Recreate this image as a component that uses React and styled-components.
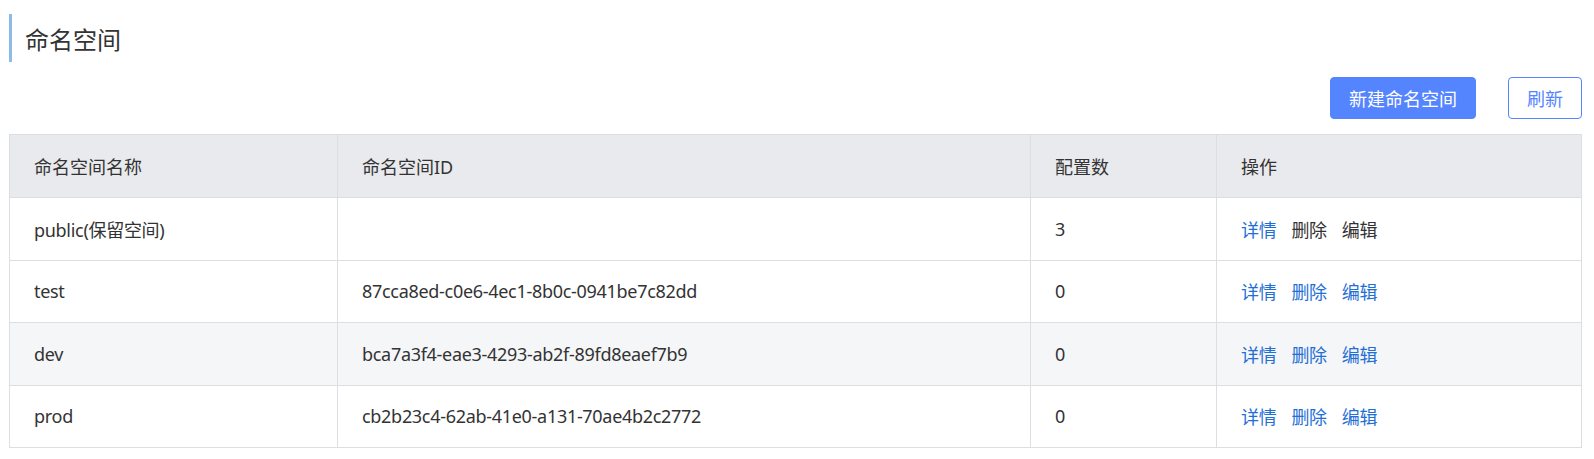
import styled, { createGlobalStyle } from 'styled-components'

const GlobalStyle = createGlobalStyle`
  body {
    margin: 0;
    background: #fff;
    font-family: "Noto Sans", "Noto Sans CJK SC", sans-serif;
    color: #333;
  }
`

const namespaces = [
  { name: 'public(保留空间)', id: '', count: 3, reserved: true },
  { name: 'test', id: '87cca8ed-c0e6-4ec1-8b0c-0941be7c82dd', count: 0 },
  { name: 'dev', id: 'bca7a3f4-eae3-4293-ab2f-89fd8eaef7b9', count: 0 },
  { name: 'prod', id: 'cb2b23c4-62ab-41e0-a131-70ae4b2c2772', count: 0 }
]

const App = () => (
  <Page>
    <GlobalStyle />
    <Title>命名空间</Title>
    <Toolbar>
      <Button primary>新建命名空间</Button>
      <Button>刷新</Button>
    </Toolbar>
    <Table>
      <colgroup>
        <col style={{ width: 328 }} />
        <col style={{ width: 693 }} />
        <col style={{ width: 186 }} />
        <col />
      </colgroup>
      <thead>
        <tr>
          <Th>命名空间名称</Th>
          <Th>命名空间ID</Th>
          <Th>配置数</Th>
          <Th>操作</Th>
        </tr>
      </thead>
      <tbody>
        {namespaces.map((ns, i) => (
          <Row key={ns.name} striped={i === 2}>
            <Td>{ns.name}</Td>
            <Td>{ns.id}</Td>
            <Td>{ns.count}</Td>
            <Td>
              <Actions>
                <Link>详情</Link>
                <Link muted={ns.reserved}>删除</Link>
                <Link muted={ns.reserved}>编辑</Link>
              </Actions>
            </Td>
          </Row>
        ))}
      </tbody>
    </Table>
  </Page>
)

const Page = styled.div`
  padding: 14px 12px 0 9px;
`

const Title = styled.h1`
  margin: 0;
  height: 48px;
  display: flex;
  align-items: center;
  border-left: 3px solid #8cbbe8;
  padding-left: 13px;
  font-size: 24px;
  font-weight: 400;
  color: #333;
`

const Toolbar = styled.div`
  display: flex;
  justify-content: flex-end;
  gap: 32px;
  margin-top: 15px;
  margin-bottom: 15px;
`

const Button = styled.button`
  height: 42px;
  padding: 0 18px;
  border-radius: 4px;
  border: 1px solid #5584ff;
  background: ${p => (p.primary ? '#5584ff' : '#fff')};
  color: ${p => (p.primary ? '#fff' : '#5584ff')};
  font-family: inherit;
  font-size: 18px;
  cursor: pointer;
`

const Table = styled.table`
  width: 100%;
  border-collapse: collapse;
  table-layout: fixed;
  border: 1px solid #dcdee2;
  font-size: 18px;
`

const Th = styled.th`
  height: 62px;
  padding: 0 24px;
  background: #e9eaee;
  border: 1px solid #dcdee2;
  text-align: left;
  font-weight: 400;
  color: #333;
`

const Row = styled.tr`
  background: ${p => (p.striped ? '#f5f6f8' : '#fff')};
`

const Td = styled.td`
  height: 61.5px;
  padding: 0 24px;
  border: 1px solid #dcdee2;
  color: #333;
  letter-spacing: -0.3px;
`

const Actions = styled.div`
  display: flex;
  gap: 15px;
`

const Link = styled.span`
  color: ${p => (p.muted ? '#333' : '#1f6fd6')};
  cursor: pointer;
`

export default App
